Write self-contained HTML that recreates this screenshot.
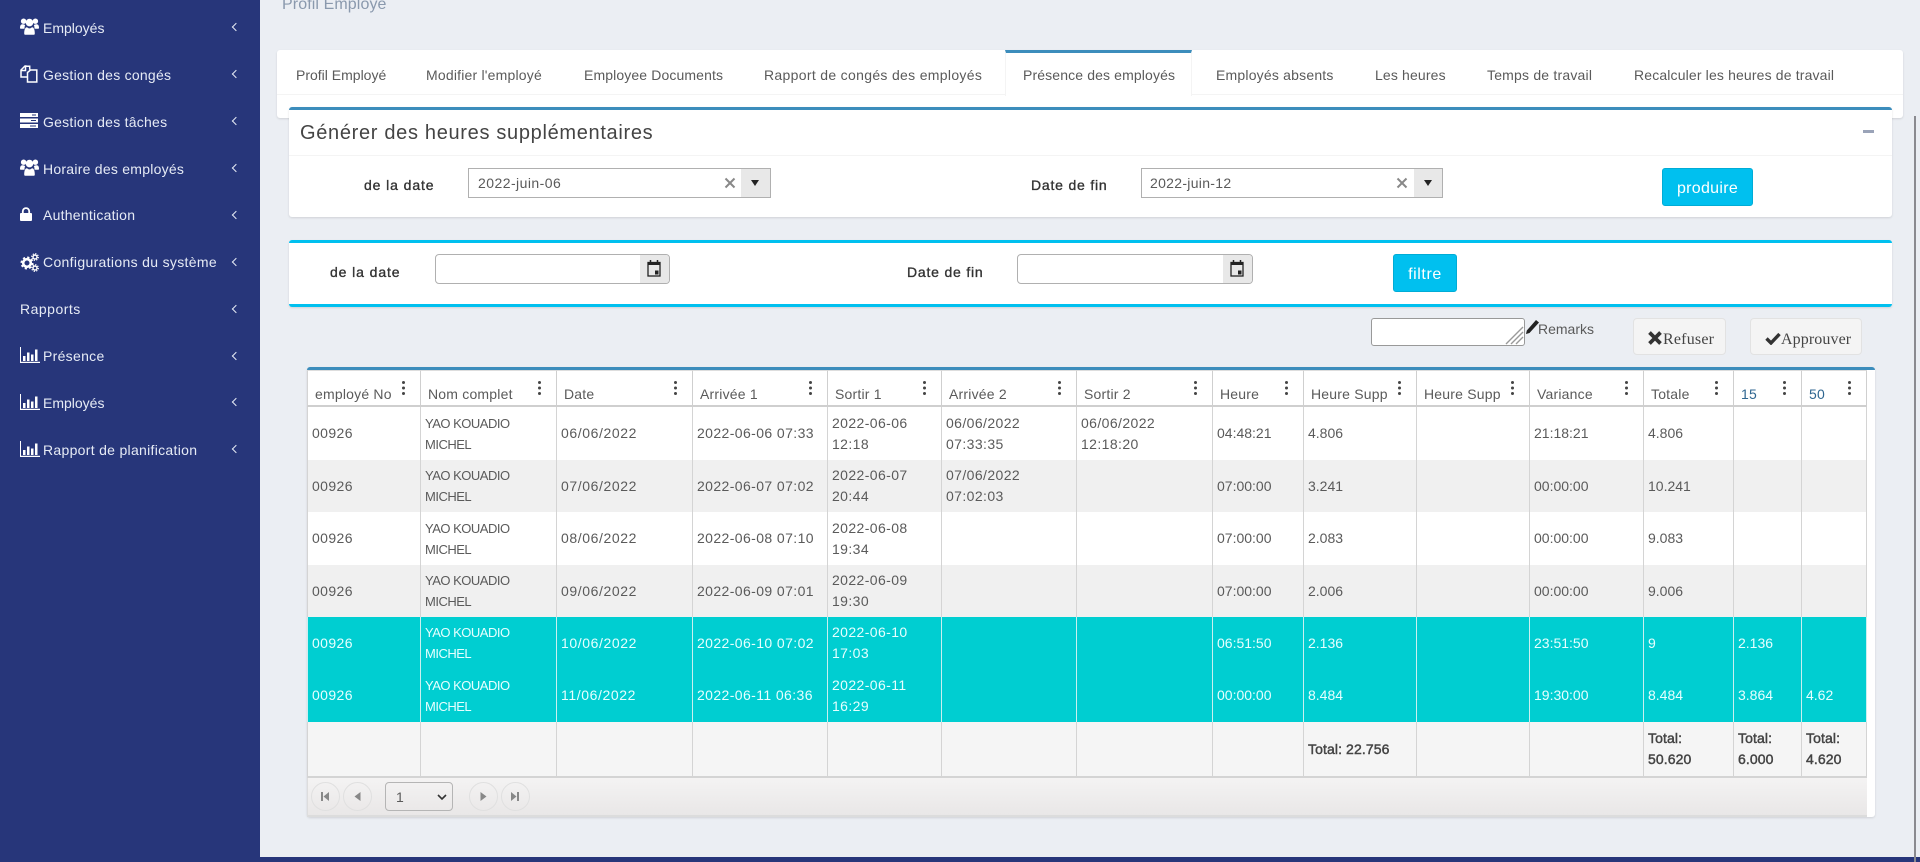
<!DOCTYPE html>
<html lang="fr"><head><meta charset="utf-8"><title>Profil Employé</title>
<style>
*{box-sizing:border-box}
html,body{margin:0;padding:0;width:1920px;height:862px;overflow:hidden;background:#ebeef3;font-family:"Liberation Sans",sans-serif;font-size:14px;color:#5a5a5a}
.a{position:absolute}
.t{position:absolute;white-space:nowrap;line-height:20px}
#side{left:0;top:0;width:260px;height:862px;background:#27367a;color:#e6ebf5}
#side .t{left:43px;letter-spacing:.25px}
#side svg{position:absolute}
#side .c{position:absolute;left:233px;width:6px;height:6px;border-left:1.6px solid #e6ebf5;border-bottom:1.6px solid #e6ebf5;transform:rotate(45deg)}
.box{background:#fff;box-shadow:0 1px 2px rgba(0,0,0,.12);border-radius:3px}
.lab{color:#333;-webkit-text-stroke:.35px #333}
.inp{background:#fff;border:1px solid #b0b0b0}
.btn{background:#00c0ef;border:1px solid #00acd6;border-radius:3px;color:#fff;text-align:center}
.gb{background:#f4f4f4;border:1px solid #e2e2e2;border-radius:4px}
.sf{font-family:"Liberation Serif",serif;font-size:16px;color:#444}
table{position:absolute;left:307px;top:370px;width:1560px;border-collapse:separate;border-spacing:0;table-layout:fixed;background:#fff}
td,th{padding:0 4px;border-right:1px solid #d4d4d4;font-weight:normal;text-align:left;white-space:nowrap;line-height:21px;font-size:14px;color:#5a5a5a;overflow:visible}
td:first-child,th:first-child{border-left:1px solid #d4d4d4}
th{position:relative;padding:12px 0 0 7px;border-bottom:2px solid #cfcfcf;border-top:1px solid #ddd;letter-spacing:.2px;border-right-color:#cfcfcf}
th i{position:absolute;right:15px;top:10px;width:3px;height:3px;border-radius:50%;background:#444;box-shadow:0 5.5px 0 #444,0 11px 0 #444}
.n{font-size:13px;letter-spacing:-.5px}
.d{letter-spacing:.6px}.dt{letter-spacing:.4px}.id{letter-spacing:.4px}
tr.g td{background:#f0f0f0}
tr.h td{background:#00ced1;color:#e6ffff;border-right-color:#c9f0f0}
tr.h td:first-child{border-left-color:#c9f0f0}
tr.f td{background:#f5f5f5;border-bottom:2px solid #d4d4d4;color:#444;letter-spacing:.1px;vertical-align:middle;-webkit-text-stroke:.45px #444}
.cir{position:absolute;top:782px;width:29px;height:29px;border:1px solid #e0e0e0;border-radius:50%}
</style></head><body>

<div id="side" class="a">
<svg style="left:20px;top:18px" width="19" height="17" viewBox="0 0 19 17" fill="#fff"><circle cx="3.6" cy="3.2" r="2.7"/><circle cx="15.4" cy="3.2" r="2.7"/><circle cx="9.5" cy="4.6" r="3.8"/><path d="M0 10c0-3 1-3.8 3-3.8 .7 0 1.2.5 2.2.8-.5 1-.7 2.2-.7 3.8H1.5C.5 10.8 0 10.6 0 10zM19 10c0-3-1-3.8-3-3.8-.7 0-1.2.5-2.2.8.5 1 .7 2.2.7 3.8h3c1 0 1.5-.2 1.5-.8zM5.2 16.8c-.5 0-1-.5-1-1.3 0-3.5.8-6.3 2.8-6.3 1 .8 1.7 1.2 2.5 1.2s1.5-.4 2.5-1.2c2 0 2.8 2.8 2.8 6.3 0 .8-.5 1.3-1 1.3z"/></svg>
<div class="t" style="top:18px;letter-spacing:0">Employés</div><i class="c" style="top:24px"></i>

<svg style="left:20px;top:65px" width="18" height="18" viewBox="0 0 18 18" fill="none" stroke="#fff" stroke-width="1.5"><path d="M6.5 1H5L1 5v7h6"/><path d="M1.5 5.5h4V1.2h4.2v3.5"/><path d="M7.5 11V7.5L10.5 5h6.3v12H7.5z"/></svg>
<div class="t" style="top:65px">Gestion des congés</div><i class="c" style="top:71px"></i>

<svg style="left:20px;top:113px" width="18" height="15" viewBox="0 0 18 15" fill="#fff"><rect y="0" width="18" height="4"/><rect y="5.5" width="18" height="4"/><rect y="11" width="18" height="4"/><rect x="12" y="1.5" width="4" height="1" fill="#27367a"/><rect x="11" y="7" width="5" height="1" fill="#27367a"/><rect x="10" y="12.5" width="6" height="1" fill="#27367a"/></svg>
<div class="t" style="top:112px">Gestion des tâches</div><i class="c" style="top:118px"></i>

<svg style="left:20px;top:159px" width="19" height="17" viewBox="0 0 19 17" fill="#fff"><circle cx="3.6" cy="3.2" r="2.7"/><circle cx="15.4" cy="3.2" r="2.7"/><circle cx="9.5" cy="4.6" r="3.8"/><path d="M0 10c0-3 1-3.8 3-3.8 .7 0 1.2.5 2.2.8-.5 1-.7 2.2-.7 3.8H1.5C.5 10.8 0 10.6 0 10zM19 10c0-3-1-3.8-3-3.8-.7 0-1.2.5-2.2.8.5 1 .7 2.2.7 3.8h3c1 0 1.5-.2 1.5-.8zM5.2 16.8c-.5 0-1-.5-1-1.3 0-3.5.8-6.3 2.8-6.3 1 .8 1.7 1.2 2.5 1.2s1.5-.4 2.5-1.2c2 0 2.8 2.8 2.8 6.3 0 .8-.5 1.3-1 1.3z"/></svg>
<div class="t" style="top:159px">Horaire des employés</div><i class="c" style="top:165px"></i>

<svg style="left:20px;top:207px" width="12" height="14" viewBox="0 0 12 14"><rect x="0" y="6" width="12" height="8" rx="1" fill="#fff"/><path d="M2.8 6.5V4.3a3.2 3.2 0 0 1 6.4 0v2.2" fill="none" stroke="#fff" stroke-width="1.8"/></svg>
<div class="t" style="top:205px">Authentication</div><i class="c" style="top:212px"></i>

<svg style="left:20px;top:253px" width="19" height="19" viewBox="0 0 19 19" fill="none" stroke="#fff"><circle cx="7" cy="10" r="3.8" stroke-width="2.6"/><circle cx="7" cy="10" r="5.6" stroke-width="1.8" stroke-dasharray="2.2 2.2"/><circle cx="15" cy="4" r="2" stroke-width="1.4"/><circle cx="15" cy="4" r="3.3" stroke-width="1.2" stroke-dasharray="1.3 1.3"/><circle cx="15" cy="15" r="2" stroke-width="1.4"/><circle cx="15" cy="15" r="3.3" stroke-width="1.2" stroke-dasharray="1.3 1.3"/></svg>
<div class="t" style="top:252px;letter-spacing:.33px">Configurations du système</div><i class="c" style="top:259px"></i>

<div class="t" style="top:299px;left:20px;letter-spacing:.5px">Rapports</div><i class="c" style="top:306px"></i>

<svg style="left:20px;top:347px" width="20" height="16" viewBox="0 0 20 16" fill="#fff"><path d="M0 0h1v14.8h19V16H0z"/><rect x="3" y="9" width="2.5" height="5"/><rect x="7" y="5.5" width="2.5" height="8.5"/><rect x="11" y="7.5" width="2.5" height="6.5"/><rect x="15" y="2.5" width="2.5" height="11.5"/></svg>
<div class="t" style="top:346px;letter-spacing:.3px">Présence</div><i class="c" style="top:353px"></i>

<svg style="left:20px;top:394px" width="20" height="16" viewBox="0 0 20 16" fill="#fff"><path d="M0 0h1v14.8h19V16H0z"/><rect x="3" y="9" width="2.5" height="5"/><rect x="7" y="5.5" width="2.5" height="8.5"/><rect x="11" y="7.5" width="2.5" height="6.5"/><rect x="15" y="2.5" width="2.5" height="11.5"/></svg>
<div class="t" style="top:393px;letter-spacing:0">Employés</div><i class="c" style="top:399px"></i>

<svg style="left:20px;top:441px" width="20" height="16" viewBox="0 0 20 16" fill="#fff"><path d="M0 0h1v14.8h19V16H0z"/><rect x="3" y="9" width="2.5" height="5"/><rect x="7" y="5.5" width="2.5" height="8.5"/><rect x="11" y="7.5" width="2.5" height="6.5"/><rect x="15" y="2.5" width="2.5" height="11.5"/></svg>
<div class="t" style="top:440px;letter-spacing:.3px">Rapport de planification</div><i class="c" style="top:446px"></i>
</div>

<div class="a" style="left:0;top:857px;width:1920px;height:5px;background:#27367a"></div>
<div class="a" style="left:1914px;top:116px;width:2px;height:746px;background:#8a8a8f"></div>

<div class="t" style="left:282px;top:-5px;font-size:16px;color:#8a99ad;letter-spacing:.1px">Profil Employé</div>

<!-- tabs -->
<div class="a box" style="left:277px;top:50px;width:1626px;height:68px"></div>
<div class="a" style="left:277px;top:94px;width:1626px;height:1px;background:#f4f4f4"></div>
<div class="a" style="left:1005px;top:50px;width:187px;height:46px;background:#fff;border-top:3px solid #3c8dbc;border-left:1px solid #f4f4f4;border-right:1px solid #f4f4f4"></div>
<div style="letter-spacing:.15px;color:#5a5a5a">
<div class="t" style="left:296px;top:65px;letter-spacing:0">Profil Employé</div>
<div class="t" style="left:426px;top:65px;letter-spacing:.2px">Modifier l'employé</div>
<div class="t" style="left:584px;top:65px;letter-spacing:.12px">Employee Documents</div>
<div class="t" style="left:764px;top:65px;letter-spacing:.32px">Rapport de congés des employés</div>
<div class="t" style="left:1023px;top:65px;letter-spacing:.13px">Présence des employés</div>
<div class="t" style="left:1216px;top:65px;letter-spacing:.2px">Employés absents</div>
<div class="t" style="left:1375px;top:65px">Les heures</div>
<div class="t" style="left:1487px;top:65px;letter-spacing:.2px">Temps de travail</div>
<div class="t" style="left:1634px;top:65px;letter-spacing:.15px">Recalculer les heures de travail</div>
</div>

<!-- generate box -->
<div class="a box" style="left:289px;top:107px;width:1603px;height:110px;border-top:3px solid #3c8dbc"></div>
<div class="a" style="left:289px;top:155px;width:1603px;height:1px;background:#f4f4f4"></div>
<div class="t" style="left:300px;top:122px;font-size:20px;line-height:22px;letter-spacing:.68px;color:#444">Générer des heures supplémentaires</div>
<div class="a" style="left:1863px;top:130px;width:11px;height:3px;background:#9aa3b8"></div>

<div class="t lab" style="left:364px;top:175px;letter-spacing:.9px">de la date</div>
<div class="a inp" style="left:468px;top:168px;width:303px;height:30px"></div>
<div class="t" style="left:478px;top:173px;letter-spacing:.45px">2022-juin-06</div>
<svg class="a" style="left:724px;top:177px" width="12" height="12" viewBox="0 0 12 12"><path d="M1.5 1.5l9 9M10.500 1.500l-9 9" stroke="#888" stroke-width="2"/></svg>
<div class="a" style="left:741px;top:169px;width:29px;height:28px;background:#e8e8e8"></div>
<div class="a" style="left:751px;top:180px;width:0;height:0;border-left:4px solid transparent;border-right:4px solid transparent;border-top:6px solid #222"></div>

<div class="t lab" style="left:1031px;top:175px;letter-spacing:.8px">Date de fin</div>
<div class="a inp" style="left:1141px;top:168px;width:302px;height:30px"></div>
<div class="t" style="left:1150px;top:173px;letter-spacing:.3px">2022-juin-12</div>
<svg class="a" style="left:1396px;top:177px" width="12" height="12" viewBox="0 0 12 12"><path d="M1.5 1.5l9 9M10.5 1.5l-9 9" stroke="#888" stroke-width="2"/></svg>
<div class="a" style="left:1414px;top:169px;width:28px;height:28px;background:#e8e8e8"></div>
<div class="a" style="left:1424px;top:180px;width:0;height:0;border-left:4px solid transparent;border-right:4px solid transparent;border-top:6px solid #222"></div>

<div class="a btn" style="left:1662px;top:168px;width:91px;height:38px;font-size:16px;line-height:39px;letter-spacing:.3px">produire</div>

<!-- filter box -->
<div class="a box" style="left:289px;top:240px;width:1603px;height:67px;border-top:3px solid #00c0ef;border-bottom:3px solid #00c0ef"></div>
<div class="t lab" style="left:330px;top:262px;letter-spacing:.9px">de la date</div>
<div class="a inp" style="left:435px;top:254px;width:235px;height:30px;border-radius:4px;overflow:hidden"><div class="a" style="right:0;top:0;width:29px;height:28px;background:#e8e8e8"></div></div>
<svg class="a" style="left:647px;top:260px" width="14" height="17" viewBox="0 0 14 17"><path d="M3.5 0v3M10.5 0v3" stroke="#222" stroke-width="1.5"/><rect x="1" y="2.5" width="12" height="13.5" fill="none" stroke="#222" stroke-width="1.3"/><rect x="1" y="2.5" width="12" height="2.5" fill="#222"/><rect x="8" y="10.5" width="3.5" height="4" fill="#222"/></svg>
<div class="t lab" style="left:907px;top:262px;letter-spacing:.8px">Date de fin</div>
<div class="a inp" style="left:1017px;top:254px;width:236px;height:30px;border-radius:4px;overflow:hidden"><div class="a" style="right:0;top:0;width:29px;height:28px;background:#e8e8e8"></div></div>
<svg class="a" style="left:1230px;top:260px" width="14" height="17" viewBox="0 0 14 17"><path d="M3.5 0v3M10.5 0v3" stroke="#222" stroke-width="1.5"/><rect x="1" y="2.5" width="12" height="13.5" fill="none" stroke="#222" stroke-width="1.3"/><rect x="1" y="2.5" width="12" height="2.5" fill="#222"/><rect x="8" y="10.5" width="3.5" height="4" fill="#222"/></svg>
<div class="a btn" style="left:1393px;top:254px;width:64px;height:38px;font-size:16px;line-height:40px;letter-spacing:.6px">filtre</div>

<!-- remarks + actions -->
<div class="a" style="left:1371px;top:318px;width:154px;height:28px;background:#fff;border:1px solid #999;border-radius:3px"></div>
<svg class="a" style="left:1504px;top:325px" width="20" height="20" viewBox="0 0 20 20" stroke="#999" stroke-width="1.4"><path d="M2 19L19 2M7 19L19 7M12 19l7-7"/></svg>
<svg class="a" style="left:1526px;top:320px" width="13" height="14" viewBox="0 0 13 14"><path d="M10 0l3 2.5L3.5 13 0 14l.8-3.5z" fill="#222"/></svg>
<div class="t" style="left:1538px;top:319px">Remarks</div>

<div class="a gb" style="left:1633px;top:318px;width:93px;height:37px"></div>
<svg class="a" style="left:1648px;top:331px" width="14" height="14" viewBox="0 0 14 14"><path d="M1.5 1.5l11 11M12.5 1.5l-11 11" stroke="#333" stroke-width="3.8"/></svg>
<div class="t sf" style="left:1663px;top:330px;letter-spacing:.2px">Refuser</div>
<div class="a gb" style="left:1750px;top:318px;width:112px;height:37px"></div>
<svg class="a" style="left:1765px;top:332px" width="16" height="13" viewBox="0 0 16 13"><path d="M1.5 6.5l4.5 4.5L14.5 2" fill="none" stroke="#333" stroke-width="3.4"/></svg>
<div class="t sf" style="left:1781px;top:330px;letter-spacing:.1px">Approuver</div>

<!-- grid -->
<div class="a box" style="left:307px;top:367px;width:1568px;height:450px;border-top:3px solid #3c8dbc"></div>
<table>
<colgroup><col style="width:114px"><col style="width:136px"><col style="width:136px"><col style="width:135px"><col style="width:114px"><col style="width:135px"><col style="width:136px"><col style="width:91px"><col style="width:113px"><col style="width:113px"><col style="width:114px"><col style="width:90px"><col style="width:68px"><col style="width:65px"></colgroup>
<tr style="height:37px"><th>employé No<i></i></th><th>Nom complet<i></i></th><th>Date<i></i></th><th>Arrivée 1<i></i></th><th>Sortir 1<i></i></th><th>Arrivée 2<i></i></th><th>Sortir 2<i></i></th><th>Heure<i></i></th><th>Heure Supp<i></i></th><th>Heure Supp<i></i></th><th>Variance<i></i></th><th>Totale<i></i></th><th style="color:#2f6690">15<i></i></th><th style="color:#2f6690">50<i></i></th></tr>
<tr style="height:53px"><td class="id">00926</td><td class="n">YAO KOUADIO<br>MICHEL</td><td class="d">06/06/2022</td><td class="dt">2022-06-06 07:33</td><td class="dt">2022-06-06<br>12:18</td><td class="dt">06/06/2022<br>07:33:35</td><td class="dt">06/06/2022<br>12:18:20</td><td>04:48:21</td><td>4.806</td><td></td><td>21:18:21</td><td>4.806</td><td></td><td></td></tr>
<tr class="g" style="height:52px"><td class="id">00926</td><td class="n">YAO KOUADIO<br>MICHEL</td><td class="d">07/06/2022</td><td class="dt">2022-06-07 07:02</td><td class="dt">2022-06-07<br>20:44</td><td class="dt">07/06/2022<br>07:02:03</td><td></td><td>07:00:00</td><td>3.241</td><td></td><td>00:00:00</td><td>10.241</td><td></td><td></td></tr>
<tr style="height:53px"><td class="id">00926</td><td class="n">YAO KOUADIO<br>MICHEL</td><td class="d">08/06/2022</td><td class="dt">2022-06-08 07:10</td><td class="dt">2022-06-08<br>19:34</td><td></td><td></td><td>07:00:00</td><td>2.083</td><td></td><td>00:00:00</td><td>9.083</td><td></td><td></td></tr>
<tr class="g" style="height:52px"><td class="id">00926</td><td class="n">YAO KOUADIO<br>MICHEL</td><td class="d">09/06/2022</td><td class="dt">2022-06-09 07:01</td><td class="dt">2022-06-09<br>19:30</td><td></td><td></td><td>07:00:00</td><td>2.006</td><td></td><td>00:00:00</td><td>9.006</td><td></td><td></td></tr>
<tr class="h" style="height:52px"><td class="id">00926</td><td class="n">YAO KOUADIO<br>MICHEL</td><td class="d">10/06/2022</td><td class="dt">2022-06-10 07:02</td><td class="dt">2022-06-10<br>17:03</td><td></td><td></td><td>06:51:50</td><td>2.136</td><td></td><td>23:51:50</td><td>9</td><td>2.136</td><td></td></tr>
<tr class="h" style="height:53px"><td class="id">00926</td><td class="n">YAO KOUADIO<br>MICHEL</td><td class="d">11/06/2022</td><td class="dt">2022-06-11 06:36</td><td class="dt">2022-06-11<br>16:29</td><td></td><td></td><td>00:00:00</td><td>8.484</td><td></td><td>19:30:00</td><td>8.484</td><td>3.864</td><td>4.62</td></tr>
<tr class="f" style="height:56px"><td></td><td></td><td></td><td></td><td></td><td></td><td></td><td></td><td>Total: 22.756</td><td></td><td></td><td>Total:<br>50.620</td><td>Total:<br>6.000</td><td>Total:<br>4.620</td></tr>
</table>

<!-- pager -->
<div class="a" style="left:307px;top:778px;width:1560px;height:39px;background:linear-gradient(#f4f3f3,#e9e7e7);border-bottom:2px solid #dcdcdc;border-left:1px solid #ddd"></div>
<div class="cir" style="left:311px"></div><div class="cir" style="left:343px"></div>
<div class="cir" style="left:469px"></div><div class="cir" style="left:501px"></div>
<svg class="a" style="left:320px;top:791px" width="10" height="12" viewBox="0 0 10 12" fill="#888"><rect x="1" y="1" width="2" height="9"/><path d="M9 1v9L3.5 5.5z"/></svg>
<svg class="a" style="left:353px;top:791px" width="9" height="12" viewBox="0 0 9 12" fill="#888"><path d="M7.5 1v9L1.5 5.5z"/></svg>
<svg class="a" style="left:479px;top:791px" width="9" height="12" viewBox="0 0 9 12" fill="#888"><path d="M1.5 1v9l6-4.5z"/></svg>
<svg class="a" style="left:510px;top:791px" width="10" height="12" viewBox="0 0 10 12" fill="#888"><rect x="7" y="1" width="2" height="9"/><path d="M1 1v9l5.5-4.5z"/></svg>
<div class="a" style="left:385px;top:782px;width:68px;height:29px;border:1px solid #b5b5b5;border-radius:4px"></div>
<div class="t" style="left:396px;top:787px">1</div>
<svg class="a" style="left:437px;top:794px" width="10" height="7" viewBox="0 0 10 7"><path d="M1 1l4 4 4-4" fill="none" stroke="#333" stroke-width="1.6"/></svg>
</body></html>
